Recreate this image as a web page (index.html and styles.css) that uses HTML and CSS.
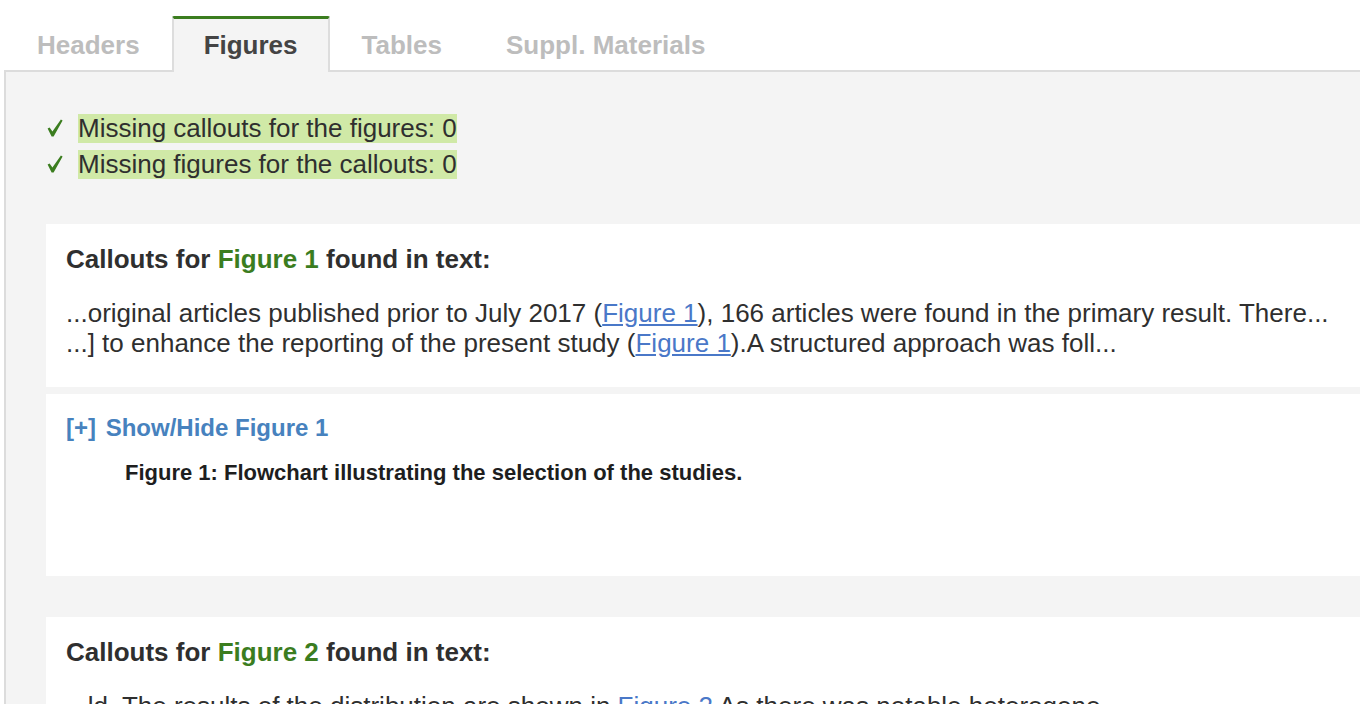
FILE: index.html
```html
<!DOCTYPE html>
<html>
<head>
<meta charset="utf-8">
<link rel="stylesheet" href="styles.css">
</head>
<body>
<div class="page">
  <ul class="tabs">
    <li class="tab">Headers</li>
    <li class="tab active">Figures</li>
    <li class="tab">Tables</li>
    <li class="tab">Suppl. Materials</li>
  </ul>
  <div class="panel">
    <div class="checks">
      <div class="check-row"><span class="check"><svg width="16" height="18" viewBox="0 0 16 18"><path d="M0.6 9.6 L2.6 8.4 L5.4 12.6 L13.9 0.4 L15.6 1.6 L6.6 17.6 L4.6 17.6 Z" fill="#3b7d1f"/></svg></span><span class="ok">Missing callouts for the figures: 0</span></div>
      <div class="check-row"><span class="check"><svg width="16" height="18" viewBox="0 0 16 18"><path d="M0.6 9.6 L2.6 8.4 L5.4 12.6 L13.9 0.4 L15.6 1.6 L6.6 17.6 L4.6 17.6 Z" fill="#3b7d1f"/></svg></span><span class="ok">Missing figures for the callouts: 0</span></div>
    </div>

    <div class="card callouts">
      <div class="card-title">Callouts for <span class="fig">Figure 1</span> found in text:</div>
      <div class="snippet">...original articles published prior to July 2017 (<a class="ref" href="#">Figure 1</a>), 166 articles were found in the primary result. There...</div>
      <div class="snippet">...] to enhance the reporting of the present study (<a class="ref" href="#">Figure 1</a>).A structured approach was foll...</div>
    </div>
    <div class="card figure-card">
      <div class="toggle"><span class="plus">[+]</span> Show/Hide Figure 1</div>
      <div class="caption">Figure 1: Flowchart illustrating the selection of the studies.</div>
    </div>

    <div class="card callouts second">
      <div class="card-title">Callouts for <span class="fig">Figure 2</span> found in text:</div>
      <div class="snippet">...ld. The results of the distribution are shown in <a class="ref plain" href="#">Figure 2</a> As there was notable heterogene...</div>
    </div>
  </div>
</div>
</body>
</html>
```

FILE: styles.css
```css
html, body {
  margin: 0;
  padding: 0;
  overflow: hidden;
  background: #ffffff;
}

body {
  font-family: "Liberation Sans", Arial, Helvetica, sans-serif;
  color: #333333;
}

.page {
  padding: 16px 0 0 4px;
  width: 1500px;
}

.tabs {
  list-style: none;
  margin: 0 0 0 1px;
  padding: 0;
  display: flex;
  position: relative;
  z-index: 1;
}

.tab {
  font-size: 26px;
  font-weight: bold;
  line-height: 30px;
  color: #bdbdbd;
  padding: 11px 30px 12px;
  border: 2px solid transparent;
  border-top-width: 3px;
  border-bottom: 0;
  margin-bottom: -2px;
}

.tab.active {
  color: #444444;
  background: #f4f4f4;
  border-color: #dddddd;
  border-top-color: #3b7d1f;
  border-radius: 2px 2px 0 0;
}

.panel {
  background: #f4f4f4;
  border-top: 2px solid #dcdcdc;
  border-left: 2px solid #dcdcdc;
  padding: 38px 0 40px 40px;
}

.checks {
  display: flex;
  flex-direction: column;
  margin-bottom: 42px;
}

.check-row {
  font-size: 26px;
  height: 36px;
  white-space: nowrap;
  display: flex;
  align-items: center;
}

.check {
  display: inline-flex;
  width: 32px;
  padding-left: 1px;
  box-sizing: border-box;
}

.check svg {
  display: block;
}

.ok {
  background: #d0e9a7;
  color: #2f2f2f;
  line-height: 29px;
}

.card {
  background: #ffffff;
  padding: 20px 20px 29px 20px;
  margin-bottom: 7px;
}

.card-title {
  font-size: 26px;
  font-weight: bold;
  line-height: 30px;
  color: #2f2f2f;
  margin-bottom: 24px;
}

.fig {
  color: #3b7d1f;
}

.snippet {
  font-size: 26px;
  line-height: 30px;
  color: #2f2f2f;
  white-space: nowrap;
}

.ref {
  color: #4a78c8;
  text-decoration: underline;
}

.ref.plain {
  text-decoration: none;
}

.figure-card {
  padding-bottom: 90px;
  margin-bottom: 41px;
}

.toggle {
  font-size: 24px;
  font-weight: bold;
  line-height: 28px;
  color: #4782be;
  margin-bottom: 18px;
}

.plus {
  margin-right: 3px;
}

.caption {
  font-size: 22px;
  font-weight: bold;
  line-height: 26px;
  color: #1e1e1e;
  padding-left: 59px;
}
```
